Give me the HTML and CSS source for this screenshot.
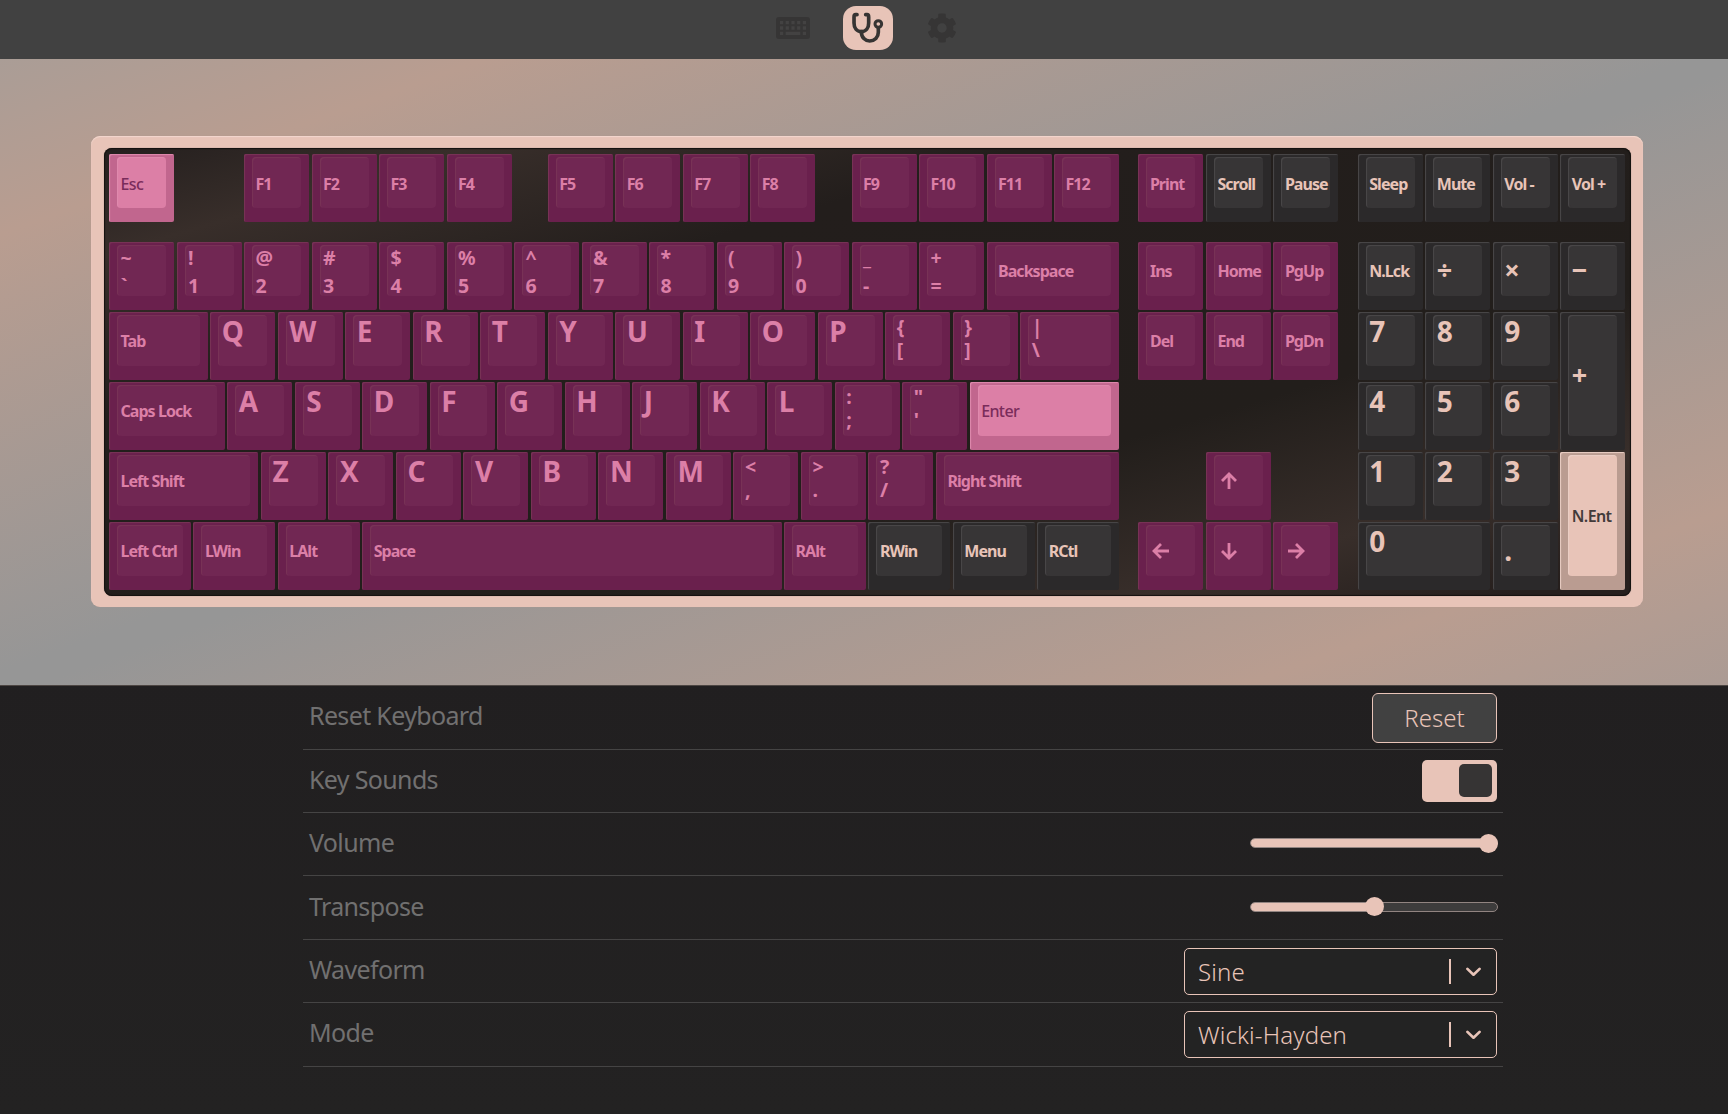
FILE: index.html
```html
<!DOCTYPE html>
<html lang="en">
<head>
<meta charset="utf-8">
<title>Keyboard Tester</title>
<link rel="stylesheet" href="styles.css">
</head>
<body>
<header class="topbar">
  <a class="tab"><svg class="ico-kbd" viewBox="0 0 34 22"><rect width="34" height="22" rx="3" fill="#363535"/><g fill="none" stroke="#434242" stroke-width="3.4"><path d="M4 5.6h26" stroke-dasharray="3.2 2.5"/><path d="M4 11h26" stroke-dasharray="3.2 2.5"/><path d="M4 16.4h3.2M9.7 16.4h14.6M26.8 16.4h3.2"/></g></svg></a>
  <a class="tab active"><svg class="ico-steth" viewBox="0 0 104 100"><g fill="none" stroke="#363433" stroke-width="11" stroke-linecap="round" stroke-linejoin="round"><path d="M21 11h-4q-5 0-5 7v18c0 15 8 26 22 26s22-11 22-26V18q0-7-5-7h-4"/><path d="M34 62c0 18 12 28 25 28 15 0 26-11 26-26V51"/><circle cx="85" cy="39" r="10" stroke-width="9"/></g></svg></a>
  <a class="tab"><svg class="ico-cog" viewBox="0 0 512 512"><path fill="#363535" d="M487.4 315.7l-42.6-24.6c4.3-23.2 4.3-47 0-70.2l42.6-24.6c4.9-2.8 7.1-8.6 5.5-14-11.1-35.6-30-67.8-54.7-94.6-3.8-4.1-10-5.1-14.8-2.3L380.8 110c-17.9-15.4-38.5-27.3-60.8-35.1V25.8c0-5.6-3.9-10.5-9.4-11.7-36.7-8.2-74.3-7.8-109.2 0-5.5 1.2-9.4 6.1-9.4 11.7V75c-22.2 7.9-42.8 19.8-60.8 35.1L88.7 85.5c-4.9-2.8-11-1.9-14.8 2.3-24.7 26.7-43.6 58.9-54.7 94.6-1.7 5.4.6 11.2 5.5 14L67.3 221c-4.3 23.2-4.3 47 0 70.2l-42.6 24.6c-4.9 2.8-7.1 8.6-5.5 14 11.1 35.6 30 67.8 54.7 94.6 3.8 4.1 10 5.1 14.8 2.3l42.6-24.6c17.9 15.4 38.5 27.3 60.8 35.1v49.2c0 5.6 3.9 10.5 9.4 11.7 36.7 8.2 74.3 7.8 109.2 0 5.5-1.2 9.4-6.1 9.4-11.7v-49.2c22.2-7.9 42.8-19.8 60.8-35.1l42.6 24.6c4.9 2.8 11 1.9 14.8-2.3 24.7-26.7 43.6-58.9 54.7-94.6 1.5-5.5-.7-11.3-5.6-14.1zM256 336c-44.1 0-80-35.9-80-80s35.9-80 80-80 80 35.9 80 80-35.9 80-80 80z"/></svg></a>
</header>
<main>
<section class="stage">
  <div class="case"><div class="plate">
    <div class="key accent"><b>Esc</b></div><i class="w4"></i>
    <div class="key"><b>F1</b></div><div class="key"><b>F2</b></div><div class="key"><b>F3</b></div><div class="key"><b>F4</b></div><i class="w2"></i>
    <div class="key"><b>F5</b></div><div class="key"><b>F6</b></div><div class="key"><b>F7</b></div><div class="key"><b>F8</b></div><i class="w2"></i>
    <div class="key"><b>F9</b></div><div class="key"><b>F10</b></div><div class="key"><b>F11</b></div><div class="key"><b>F12</b></div><i class="w1"></i>
    <div class="key"><b>Print</b></div><div class="key dark"><b>Scroll</b></div><div class="key dark"><b>Pause</b></div><i class="w1"></i>
    <div class="key dark"><b>Sleep</b></div><div class="key dark"><b>Mute</b></div><div class="key dark"><b>Vol -</b></div><div class="key dark"><b>Vol +</b></div>
    <i class="w90"></i>

    <div class="key num"><b>~</b><b>`</b></div><div class="key num"><b>!</b><b>1</b></div><div class="key num"><b>@</b><b>2</b></div><div class="key num"><b>#</b><b>3</b></div><div class="key num"><b>$</b><b>4</b></div><div class="key num"><b>%</b><b>5</b></div><div class="key num"><b>^</b><b>6</b></div><div class="key num"><b>&amp;</b><b>7</b></div><div class="key num"><b>*</b><b>8</b></div><div class="key num"><b>(</b><b>9</b></div><div class="key num"><b>)</b><b>0</b></div><div class="key num"><b>_</b><b>-</b></div><div class="key num"><b>+</b><b>=</b></div><div class="key w8"><b>Backspace</b></div><i class="w1"></i>
    <div class="key"><b>Ins</b></div><div class="key"><b>Home</b></div><div class="key"><b>PgUp</b></div><i class="w1"></i>
    <div class="key dark"><b>N.Lck</b></div><div class="key dark op"><b>÷</b></div><div class="key dark op"><b>×</b></div><div class="key dark op"><b>−</b></div>

    <div class="key w6"><b>Tab</b></div><div class="key big"><b>Q</b></div><div class="key big"><b>W</b></div><div class="key big"><b>E</b></div><div class="key big"><b>R</b></div><div class="key big"><b>T</b></div><div class="key big"><b>Y</b></div><div class="key big"><b>U</b></div><div class="key big"><b>I</b></div><div class="key big"><b>O</b></div><div class="key big"><b>P</b></div><div class="key sym"><b>{</b><b>[</b></div><div class="key sym"><b>}</b><b>]</b></div><div class="key sym w6"><b>|</b><b>\</b></div><i class="w1"></i>
    <div class="key"><b>Del</b></div><div class="key"><b>End</b></div><div class="key"><b>PgDn</b></div><i class="w1"></i>
    <div class="key dark big"><b>7</b></div><div class="key dark big"><b>8</b></div><div class="key dark big"><b>9</b></div><div class="key dark op tall"><b>+</b></div>

    <div class="key w7"><b>Caps Lock</b></div><div class="key big"><b>A</b></div><div class="key big"><b>S</b></div><div class="key big"><b>D</b></div><div class="key big"><b>F</b></div><div class="key big"><b>G</b></div><div class="key big"><b>H</b></div><div class="key big"><b>J</b></div><div class="key big"><b>K</b></div><div class="key big"><b>L</b></div><div class="key sym"><b>:</b><b>;</b></div><div class="key sym"><b>"</b><b>'</b></div><div class="key accent w9"><b>Enter</b></div><i class="w14"></i>
    <div class="key dark big"><b>4</b></div><div class="key dark big"><b>5</b></div><div class="key dark big"><b>6</b></div>

    <div class="key w9"><b>Left Shift</b></div><div class="key big"><b>Z</b></div><div class="key big"><b>X</b></div><div class="key big"><b>C</b></div><div class="key big"><b>V</b></div><div class="key big"><b>B</b></div><div class="key big"><b>N</b></div><div class="key big"><b>M</b></div><div class="key sym"><b>&lt;</b><b>,</b></div><div class="key sym"><b>&gt;</b><b>.</b></div><div class="key sym"><b>?</b><b>/</b></div><div class="key w11"><b>Right Shift</b></div><i class="w5"></i>
    <div class="key arrow"><svg viewBox="0 0 18 18"><path d="M9 17V2M2 9l7-7 7 7"/></svg></div><i class="w5"></i>
    <div class="key dark big"><b>1</b></div><div class="key dark big"><b>2</b></div><div class="key dark big"><b>3</b></div><div class="key blush tall"><b>N.Ent</b></div>

    <div class="key w5"><b>Left Ctrl</b></div><div class="key w5"><b>LWin</b></div><div class="key w5"><b>LAlt</b></div><div class="key w25"><b>Space</b></div><div class="key w5"><b>RAlt</b></div><div class="key dark w5"><b>RWin</b></div><div class="key dark w5"><b>Menu</b></div><div class="key dark w5"><b>RCtl</b></div><i class="w1"></i>
    <div class="key arrow"><svg viewBox="0 0 18 18"><path d="M17 9H2M9 2L2 9l7 7"/></svg></div><div class="key arrow"><svg viewBox="0 0 18 18"><path d="M9 1v15M2 9l7 7 7-7"/></svg></div><div class="key arrow"><svg viewBox="0 0 18 18"><path d="M1 9h15M9 2l7 7-7 7"/></svg></div><i class="w1"></i>
    <div class="key dark big w8"><b>0</b></div><div class="key dark dot"><b>.</b></div>
  </div></div>
</section>
<section class="settings">
  <div class="row"><span>Reset Keyboard</span><button class="reset">Reset</button></div>
  <div class="row"><span>Key Sounds</span><div class="toggle"><div class="knob"></div></div></div>
  <div class="row"><span>Volume</span><div class="slider"><div class="fill full"></div><div class="thumb"></div></div></div>
  <div class="row"><span>Transpose</span><div class="slider"><div class="fill"></div><div class="thumb"></div></div></div>
  <div class="row"><span>Waveform</span><div class="select"><em>Sine</em><i></i><svg viewBox="0 0 20 20"><path d="M4.2 7.5L10 13l5.8-5.5"/></svg></div></div>
  <div class="row"><span>Mode</span><div class="select"><em>Wicki-Hayden</em><i></i><svg viewBox="0 0 20 20"><path d="M4.2 7.5L10 13l5.8-5.5"/></svg></div></div>
</section>
</main>
</body>
</html>
```
FILE: styles.css
```css
* { box-sizing: border-box; }
body { margin: 0; height: 1114px; overflow: hidden; background: linear-gradient(#211f20 60%, #232222); font-family: "Noto Sans", "Open Sans", sans-serif; }

.topbar { height: 59px; background: #414141; display: flex; justify-content: center; align-items: flex-start; gap: 24px; padding: 6px 0 0 7px; }
.tab { width: 50px; height: 44px; border-radius: 13px; display: flex; align-items: center; justify-content: center; }
.active { background: #e8c4b8; }
.ico-kbd { width: 34px; height: 22px; margin-right: 2px; }
.ico-steth { width: 34.7px; height: 33.3px; }
.ico-cog { width: 30px; height: 30px; }

.stage { height: 627px; border-bottom: 1px solid #4d4643; padding: 77px 0 0 91px; background: linear-gradient(to bottom right, #aa9d96 0%, #b99d90 14%, #969696 49%, #969696 51%, #b99d90 86%, #ab9b94 100%); }
.case { width: 1552px; height: 471px; border-radius: 9px; background: #e8c4b8; padding: 12px 12px 11px 13px; box-shadow: inset 0 1px 1px #f3d8cf, 0 0 1px #b49c93; }
.plate { height: 448px; border-radius: 8px; padding: 6px 0 0 5px; box-shadow: inset 0 0 1px 1px #14110f, 0 0 1px #7d6a63; display: grid; grid-template-columns: repeat(90, 16.875px); grid-template-rows: 70px 17.5px repeat(5, 70px); background: linear-gradient(to bottom right, #241f1e 0%, #382e2a 12%, #231e1c 30%, #221e1b 66%, #382e2a 84%, #261f1d 96%); }

.key { --side: #6a204d; --top: #712753; --edge: #793557; --text: #dc7fa7; grid-column: span 4; margin: 0 2.5px 2px 0; padding: 3px 8px 14px; display: flex; background: var(--side); border-radius: 2px; box-shadow: inset 1px 1px 1px var(--edge); position: relative; color: var(--text); flex-direction: column; justify-content: center; align-items: flex-start; z-index: 0; }
.key::before { content: ""; position: absolute; z-index: -1; inset: 3px 8px 14px; border-radius: 4px; background: var(--top); box-shadow: inset 1px 1px 1px var(--edge); }
.dark { --side: #2b292a; --top: #373536; --edge: #4b494a; --text: #e8c4b8; }
.accent { --side: #c1668e; --top: #dc7fa6; --edge: #df8bae; --text: #7a2c5b; }
.blush { --side: #ba9c91; --top: #e8c4b8; --edge: #ecd0c6; --text: #423b3a; }
.key b { font-size: 16px; font-weight: 700; line-height: 20px; letter-spacing: -.95px; margin: 2px 0 0 3.5px; white-space: nowrap; }
.accent b { font-weight: 500; letter-spacing: -.6px; }
.blush b { font-weight: 600; letter-spacing: -.6px; }
.big { justify-content: flex-start; }
.big b { font-size: 28px; line-height: 34px; letter-spacing: 0; margin-top: -1px; }
.num, .sym { justify-content: flex-start; }
.num b { font-size: 19.5px; line-height: 28px; letter-spacing: 0; margin-top: 0; position: relative; top: -1px; }
.sym b { font-size: 19.5px; line-height: 23.5px; letter-spacing: 0; margin-top: 0; }
.op b { font-size: 27px; line-height: 30px; margin-top: 0; }
.dot b { font-size: 28px; line-height: 34px; margin-top: 0; }
.arrow svg { width: 18px; height: 18px; margin: 2px 0 0 6px; fill: none; stroke: var(--text); stroke-width: 2.8; }
.tall { grid-row: span 2; }
.w1 { grid-column: span 1; }
.w2 { grid-column: span 2; }
.w4 { grid-column: span 4; }
.w5 { grid-column: span 5; }
.w6 { grid-column: span 6; }
.w7 { grid-column: span 7; }
.w8 { grid-column: span 8; }
.w9 { grid-column: span 9; }
.w11 { grid-column: span 11; }
.w14 { grid-column: span 14; }
.w25 { grid-column: span 25; }
.w90 { grid-column: span 90; }

.settings { width: 1200px; margin-left: 303px; padding-top: .3px; }
.row { height: 63.4px; border-bottom: 1px solid #454444; padding: 0 6px; display: flex; align-items: center; justify-content: space-between; color: #717070; font-size: 25px; }
.row span { margin-top: -4px; letter-spacing: -.65px; }
.reset { width: 125px; height: 50px; margin-top: 1px; border: 1px solid #e8c4b8; border-radius: 6px; background: #414141; color: #e8c4b8; font: 300 24px "Noto Sans", sans-serif; padding: 0; }
.toggle { width: 75px; height: 42px; border-radius: 5px; background: #e8c4b8; display: flex; justify-content: flex-end; align-items: center; padding-right: 5px; }
.knob { width: 33px; height: 33px; border-radius: 5px; background: #363434; }
.slider { width: 248px; height: 10px; margin: -2px -1px 0 0; border: 1px solid #918481; border-radius: 5px; background: #3d3c3c; display: flex; align-items: center; }
.fill { width: 115px; height: 8px; border-radius: 4px 0 0 4px; background: #e8c4b8; }
.full { width: 230px; }
.thumb { width: 19px; height: 19px; border-radius: 50%; background: #e8c4b8; flex: none; margin: 0 -1px; }
.select { width: 313px; height: 47px; margin-top: 1px; border: 1px solid #e8c4b8; border-radius: 5px; background: #232323; color: #e8c4b8; display: flex; align-items: center; padding: 0 12px 0 13px; font-size: 24px; }
.select em { flex: 1; font-style: normal; font-weight: 300; letter-spacing: .15px; }
.select i { width: 2px; height: 25px; background: #e8c4b8; margin-right: 12px; }
.select svg { width: 21px; height: 21px; fill: none; stroke: #e8c4b8; stroke-width: 2.6; stroke-linecap: round; stroke-linejoin: round; }
```
